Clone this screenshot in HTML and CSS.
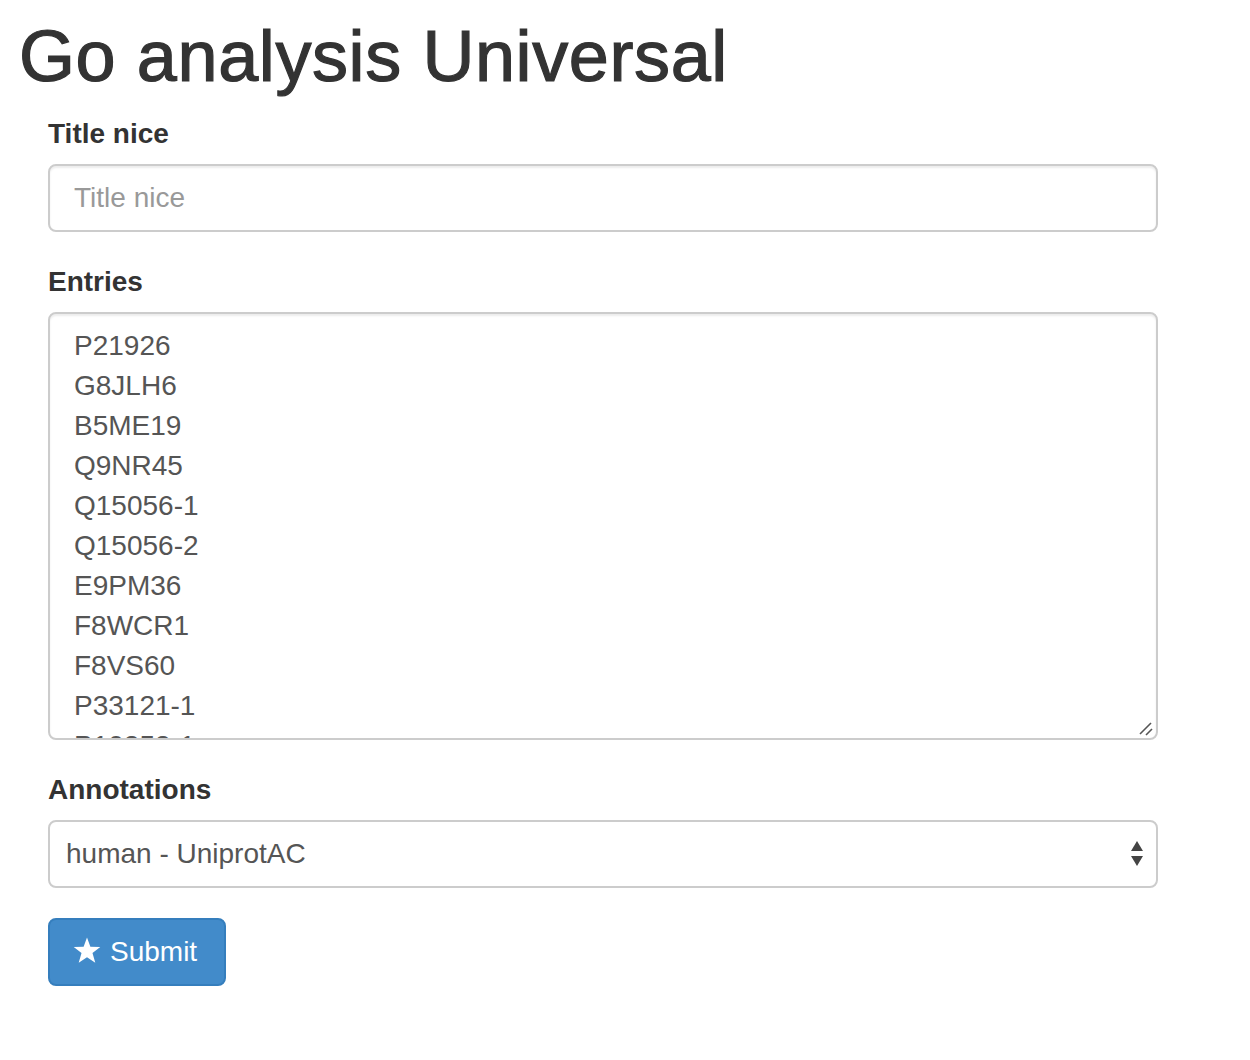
FILE: index.html
```html
<!DOCTYPE html>
<html>
<head>
<meta charset="utf-8">
<link rel="stylesheet" href="styles.css">
</head>
<body>
<h1 class="title">Go analysis Universal</h1>
<form class="form">
  <div class="group">
    <label class="label" for="t">Title nice</label>
    <input class="control" id="t" type="text" placeholder="Title nice">
  </div>
  <div class="group">
    <label class="label" for="e">Entries</label>
    <div class="area-wrap">
      <textarea class="control area" id="e" rows="10">P21926
G8JLH6
B5ME19
Q9NR45
Q15056-1
Q15056-2
E9PM36
F8WCR1
F8VS60
P33121-1
P10253-1
P12345</textarea>
      <svg class="grip" width="16" height="16" viewBox="0 0 16 16"><line x1="2" y1="13" x2="13" y2="2" stroke="#555" stroke-width="1.6"/><line x1="8" y1="14" x2="14" y2="8" stroke="#555" stroke-width="1.6"/></svg>
    </div>
  </div>
  <div class="group">
    <label class="label" for="a">Annotations</label>
    <div class="select-wrap">
      <select class="control select" id="a">
        <option>human - UniprotAC</option>
      </select>
      <svg class="arrows" width="14" height="26" viewBox="0 0 14 26"><polygon points="7,0 13,10 1,10" fill="#444"/><polygon points="1,15 13,15 7,25" fill="#444"/></svg>
    </div>
  </div>
  <button class="btn" type="button"><svg class="star" width="28" height="27" viewBox="0 0 24 23"><polygon points="12,0.3 14.9,8.2 23.4,8.5 16.7,13.7 19.1,22 12,17.2 4.9,22 7.3,13.7 0.6,8.5 9.1,8.2" fill="#fff"/></svg><span>Submit</span></button>
</form>
</body>
</html>
```
FILE: styles.css
```css
html, body {
  margin: 0;
  padding: 0;
  background: #fff;
}
body {
  font-family: "Liberation Sans", Arial, sans-serif;
  color: #333;
  font-size: 28px;
  line-height: 40px;
}
.title {
  margin: 17px 0 18px 0;
  padding-left: 19px;
  font-size: 72px;
  line-height: 79px;
  font-weight: normal;
  color: #333;
  letter-spacing: 0.6px;
  -webkit-text-stroke: 1.2px #333;
}
.form {
  width: 1110px;
  margin-left: 48px;
}
.group {
  margin-bottom: 30px;
}
.label {
  display: block;
  font-weight: bold;
  font-size: 28px;
  line-height: 40px;
  margin-bottom: 10px;
}
.control {
  display: block;
  box-sizing: border-box;
  width: 100%;
  height: 68px;
  margin: 0;
  padding: 12px 24px;
  font-family: "Liberation Sans", Arial, sans-serif;
  font-size: 28px;
  line-height: 40px;
  color: #555;
  background: #fff;
  border: 2px solid #ccc;
  border-radius: 8px;
  box-shadow: inset 0 2px 2px rgba(0,0,0,0.075);
  outline: none;
}
.control::placeholder {
  color: #999;
}
.area-wrap {
  position: relative;
}
.area {
  height: 428px;
  resize: none;
  overflow: hidden;
}
.grip {
  position: absolute;
  right: 4px;
  bottom: 3px;
  pointer-events: none;
}
.select-wrap {
  position: relative;
}
.select {
  appearance: none;
  -webkit-appearance: none;
  padding-left: 16px;
  box-shadow: none;
}
.arrows {
  position: absolute;
  right: 14px;
  top: 21px;
  pointer-events: none;
}
.btn {
  display: flex;
  align-items: center;
  gap: 9px;
  box-sizing: border-box;
  height: 68px;
  padding: 0 27px 0 23px;
  font-family: "Liberation Sans", Arial, sans-serif;
  font-size: 28px;
  line-height: 40px;
  color: #fff;
  background: #428bca;
  border: 2px solid #357ebd;
  border-radius: 8px;
  cursor: pointer;
}
.star {
  display: block;
  margin-top: -3px;
}
```
